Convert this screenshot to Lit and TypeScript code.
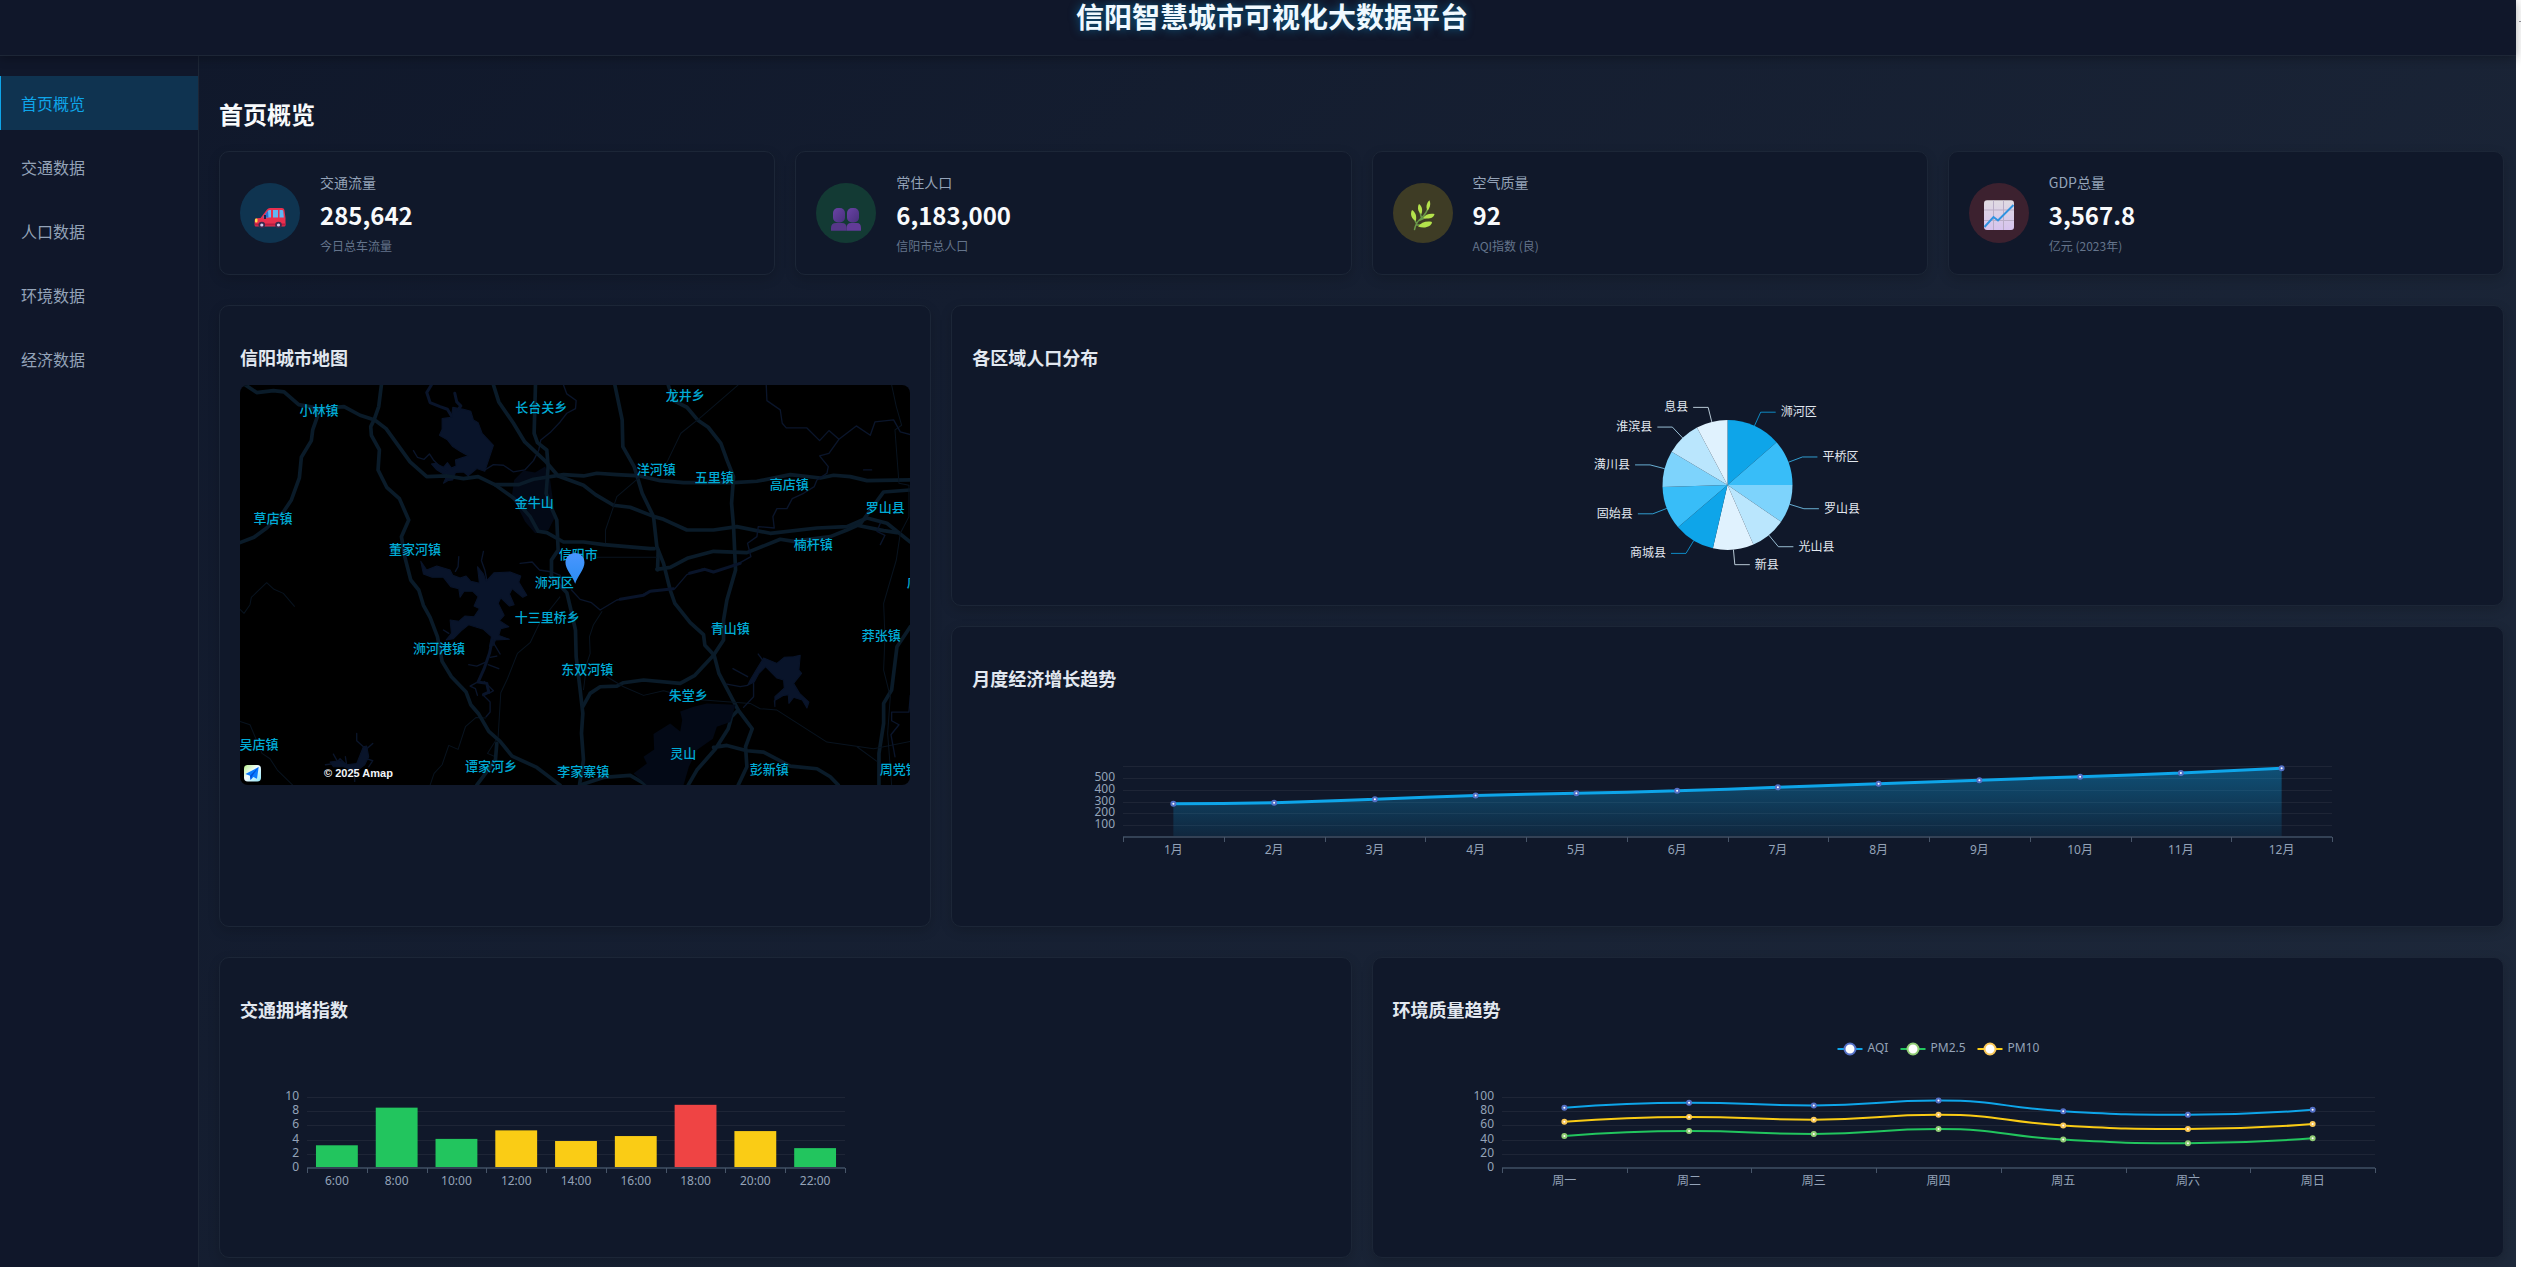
import { LitElement, html, svg, css, nothing } from "lit";
import { customElement, property, state } from "lit/decorators.js";
import { classMap } from "lit/directives/class-map.js";

const CHART_FONT = css`"Noto Sans", "Noto Sans CJK SC", sans-serif`;

type Point = [number, number];

/** Smooth cubic path through the points, never overshooting its neighbours. */
function smoothPath(pts: Point[]): string {
  const smooth = 0.5;
  const clamp = (v: number, a: number, b: number) =>
    Math.max(Math.min(a, b), Math.min(Math.max(a, b), v));
  const n = pts.length;
  const handles = pts.map((p, i) => {
    if (i === 0 || i === n - 1) return { before: p, after: p };
    const prev = pts[i - 1];
    const next = pts[i + 1];
    const vx = (next[0] - prev[0]) * smooth;
    const vy = (next[1] - prev[1]) * smooth;
    const lp = Math.hypot(p[0] - prev[0], p[1] - prev[1]);
    const ln = Math.hypot(next[0] - p[0], next[1] - p[1]);
    const r = ln / (lp + ln);
    const after: Point = [
      clamp(p[0] + vx * r, p[0], next[0]),
      clamp(p[1] + vy * r, p[1], next[1]),
    ];
    const k = (1 - r) / r;
    const before: Point = [
      clamp(p[0] - (after[0] - p[0]) * k, prev[0], p[0]),
      clamp(p[1] - (after[1] - p[1]) * k, prev[1], p[1]),
    ];
    return {
      before,
      after: [p[0] + (p[0] - before[0]) / k, p[1] + (p[1] - before[1]) / k] as Point,
    };
  });
  let d = `M${pts[0][0]} ${pts[0][1]}`;
  for (let i = 1; i < n; i++) {
    const a = handles[i - 1].after;
    const b = handles[i].before;
    d += `C${a[0]} ${a[1]} ${b[0]} ${b[1]} ${pts[i][0]} ${pts[i][1]}`;
  }
  return d;
}

/** Base for charts: keeps `width` in step with the element's own width. */
class SizedChart extends LitElement {
  @state() protected width = 0;
  private observer?: ResizeObserver;

  connectedCallback() {
    super.connectedCallback();
    this.observer = new ResizeObserver(() => this.measure());
    this.observer.observe(this);
    this.measure();
  }

  disconnectedCallback() {
    super.disconnectedCallback();
    this.observer?.disconnect();
  }

  private measure() {
    this.width = Math.round(this.getBoundingClientRect().width);
  }
}

interface Series {
  name: string;
  color: string;
  marker: string;
  values: number[];
}

@customElement("axis-chart")
class AxisChart extends SizedChart {
  @property({ attribute: false }) categories: string[] = [];
  @property({ attribute: false }) series: Series[] = [];
  @property({ attribute: false }) bars: { value: number; color: string }[] = [];
  @property({ type: Number }) max = 100;
  @property({ type: Number }) step = 20;
  @property({ type: Number }) lineWidth = 2;
  @property({ type: Boolean }) area = false;
  @property({ type: Boolean }) legend = false;
  @property({ type: Boolean }) innerTicksOnly = false;
  @property() label = "";

  static styles = css`
    :host {
      display: block;
      height: 200px;
    }
    svg {
      display: block;
      width: 100%;
      height: 200px;
    }
    text {
      font-family: ${CHART_FONT};
      font-size: 12px;
      fill: #94a3b8;
    }
    .end {
      text-anchor: end;
    }
    .mid {
      text-anchor: middle;
    }
    .grid {
      stroke: rgba(255, 255, 255, 0.06);
      stroke-width: 1;
    }
    .axis {
      stroke: #334155;
      stroke-width: 2;
    }
    .tick {
      stroke: #475569;
      stroke-width: 1;
    }
    .line {
      fill: none;
      stroke-linejoin: bevel;
    }
    .dot {
      fill: #fff;
      stroke-width: 2;
    }
  `;

  render() {
    const w = this.width;
    if (!w) return nothing;
    const left = Math.round(w * 0.1);
    const right = w - left;
    const top = 60;
    const bottom = 131;
    const y = (v: number) => bottom - (v / this.max) * (bottom - top);
    const band = (right - left) / this.categories.length;
    const cx = (i: number) => left + band * (i + 0.5);
    const levels: number[] = [];
    for (let v = 0; v <= this.max; v += this.step) levels.push(v);

    return html`<svg role="img" aria-label=${this.label}>
      <defs>
        <linearGradient id="fade" x1="0" y1="0" x2="0" y2="1">
          <stop offset="0" stop-color="#0ea5e9" stop-opacity="0.4" />
          <stop offset="1" stop-color="#0ea5e9" stop-opacity="0.1" />
        </linearGradient>
      </defs>
      ${levels.map((v) => {
        const gy = Math.round(y(v)) + 0.5;
        const hidden = this.innerTicksOnly && (v === 0 || v === this.max);
        return svg`
          ${v ? svg`<line class="grid" x1=${left} x2=${right} y1=${gy} y2=${gy} />` : nothing}
          ${hidden ? nothing : svg`<text class="end" x=${left - 8} y=${Math.round(y(v)) + 3}>${v}</text>`}`;
      })}
      ${this.bars.map(
        (b, i) => svg`<rect fill=${b.color} x=${cx(i) - band * 0.35} width=${band * 0.7}
          y=${y(b.value)} height=${bottom - y(b.value)} />`
      )}
      ${this.area
        ? this.series.map((s) => {
            const pts = s.values.map((v, i): Point => [cx(i), y(v)]);
            return svg`<path fill="url(#fade)"
              d=${`${smoothPath(pts)}L${cx(pts.length - 1)} ${bottom}L${cx(0)} ${bottom}Z`} />`;
          })
        : nothing}
      <line class="axis" x1=${left} x2=${right} y1=${bottom} y2=${bottom} />
      ${[...this.categories, ""].map((_, i) => {
        const tx = Math.round(left + band * i) + 0.5;
        return svg`<line class="tick" x1=${tx} x2=${tx} y1=${bottom} y2=${bottom + 5} />`;
      })}
      ${this.categories.map(
        (c, i) => svg`<text class="mid" x=${cx(i)} y=${bottom + 17}>${c}</text>`
      )}
      ${this.series.map((s) => {
        const pts = s.values.map((v, i): Point => [cx(i), y(v)]);
        return svg`<path class="line" stroke=${s.color} stroke-width=${this.lineWidth} d=${smoothPath(pts)} />`;
      })}
      ${this.series.map((s) =>
        s.values.map(
          (v, i) => svg`<circle class="dot" stroke=${s.marker} cx=${cx(i)} cy=${y(v)} r="2" />`
        )
      )}
      ${this.legend ? this.renderLegend(w) : nothing}
    </svg>`;
  }

  private renderLegend(w: number) {
    const starts = [-101, -38, 39];
    return this.series.map((s, i) => {
      const x = w / 2 + starts[i];
      return svg`
        <line x1=${x} x2=${x + 25} y1="12" y2="12" stroke=${s.color} stroke-width="2" />
        <circle cx=${x + 12.5} cy="12" r="5.5" fill="#fff" stroke=${s.marker} stroke-width="2" />
        <text x=${x + 30} y="15">${s.name}</text>`;
    });
  }
}

@customElement("pie-chart")
class PieChart extends SizedChart {
  @property({ attribute: false }) slices: { name: string; to: number }[] = [];

  static styles = css`
    :host {
      display: block;
      height: 200px;
    }
    svg {
      display: block;
      width: 100%;
      height: 200px;
    }
    text {
      font-family: ${CHART_FONT};
      font-size: 12px;
      fill: #e2e8f0;
    }
    .end {
      text-anchor: end;
    }
    .leader {
      fill: none;
      opacity: 0.8;
    }
  `;

  render() {
    if (!this.width) return nothing;
    const colors = ["#0ea5e9", "#38bdf8", "#7dd3fc", "#bae6fd", "#e0f2fe"];
    const cx = this.width / 2;
    const cy = 100;
    const r = 65;
    const at = (deg: number, rad: number): Point => {
      const a = (deg * Math.PI) / 180;
      return [cx + rad * Math.sin(a), cy - rad * Math.cos(a)];
    };
    let from = 0;
    return html`<svg role="img" aria-label="各区域人口分布">
      ${this.slices.map((s, i) => {
        const [x1, y1] = at(from, r);
        const [x2, y2] = at(s.to, r);
        const mid = (from + s.to) / 2;
        const [lx, ly] = at(mid, r);
        const [ex, ey] = at(mid, r + 15);
        const dir = mid < 180 ? 1 : -1;
        from = s.to;
        const color = colors[i % colors.length];
        return svg`
          <path fill=${color} d=${`M${cx} ${cy}L${x1} ${y1}A${r} ${r} 0 0 1 ${x2} ${y2}Z`} />
          <path class="leader" stroke=${color} d=${`M${lx} ${ly}L${ex} ${ey}h${dir * 15}`} />
          <text class=${dir < 0 ? "end" : ""} x=${ex + dir * 20} y=${ey + 4}>${s.name}</text>`;
      })}
    </svg>`;
  }
}

const MAP_LABELS: [string, number, number][] = [
  ["小林镇", 267, 122],
  ["草店镇", 129, 448],
  ["董家河镇", 555, 540],
  ["浉河港镇", 626, 837],
  ["吴店镇", 86, 1125],
  ["谭家河乡", 784, 1191],
  ["长台关乡", 932, 114],
  ["金牛山", 911, 398],
  ["信阳市", 1044, 556],
  ["浉河区", 973, 639],
  ["十三里桥乡", 951, 745],
  ["东双河镇", 1070, 900],
  ["李家寨镇", 1060, 1207],
  ["龙井乡", 1364, 79],
  ["洋河镇", 1279, 300],
  ["五里镇", 1451, 324],
  ["高店镇", 1678, 344],
  ["罗山县", 1966, 413],
  ["楠杆镇", 1750, 524],
  ["青山镇", 1500, 778],
  ["莽张镇", 1954, 799],
  ["朱堂乡", 1375, 977],
  ["灵山", 1358, 1153],
  ["彭新镇", 1617, 1200],
  ["周党镇", 2006, 1200],
  ["庙仙乡", 2087, 640],
];

@customElement("city-map")
class CityMap extends LitElement {
  static styles = css`
    :host {
      display: block;
    }
    svg {
      display: block;
      width: 100%;
      height: 400px;
      border-radius: 8px;
      background: #000;
    }
    .place {
      font: 500 13px "Noto Sans CJK SC", sans-serif;
      fill: #00abd6;
      text-anchor: middle;
    }
    .credit {
      font: bold 11px "Liberation Sans", sans-serif;
      fill: #f1f5f9;
    }
    .road {
      fill: none;
      stroke: #0a1b29;
      stroke-width: 11;
      stroke-linejoin: round;
      stroke-linecap: round;
    }
    .lane {
      fill: none;
      stroke: #08131f;
      stroke-width: 3;
      stroke-linejoin: round;
    }
    .river {
      fill: none;
      stroke: #0a152b;
      stroke-width: 4;
      stroke-linejoin: round;
      stroke-linecap: round;
    }
    .stream {
      fill: none;
      stroke: #09142a;
      stroke-width: 9;
      stroke-linejoin: round;
      stroke-linecap: round;
    }
    .water {
      fill: #09142a;
      stroke: #09142a;
      stroke-width: 3;
      stroke-linejoin: round;
    }
    .park {
      fill: #030916;
    }
  `;

  render() {
    return html`<svg viewBox="0 0 670 400" preserveAspectRatio="xMidYMid slice" role="img" aria-label="信阳城市地图">
      <defs>
        <linearGradient id="pin" x1="0" y1="0" x2="0" y2="1">
          <stop offset="0" stop-color="#4a96ff" />
          <stop offset="1" stop-color="#2a8df2" />
        </linearGradient>
        <linearGradient id="badge" x1="0" y1="0" x2="1" y2="1">
          <stop offset="0" stop-color="#b9f08a" />
          <stop offset="0.45" stop-color="#f4fbff" />
          <stop offset="1" stop-color="#8fe6f7" />
        </linearGradient>
      </defs>
      <g transform="scale(0.33333) translate(-30 -45)">
        <path class="park" d="M852 330L880 302L915 308L945 290L960 330L975 440L955 480L915 490L885 455L862 410L845 380Z" />
        <path class="water" d="M668 112L700 118L722 124L730 150L744 158L756 190L790 226L768 292L764 304L740 296L714 318L700 306L676 308L668 330L654 332L640 340L650 318L620 300L604 282L616 280L640 292L652 278L664 294L678 288L676 270L700 262L714 258L690 244L668 230L652 210L628 196L636 178L636 146L664 142Z" />
        <path class="stream" d="M604 45L590 68L600 98L630 110L652 118L664 138M674 70L680 96L692 108L684 120" />
        <path class="river" d="M550 242L562 262L582 268L598 252L610 270L630 290L650 304" />
        <path class="river" d="M764 300L790 284L820 286L850 306L884 300L910 272L926 240L932 210L960 188L990 156L1010 130L1036 116L1038 92L1010 72L1000 45" />
        <path class="water" d="M572 574L590 600L620 588L660 600L668 616L690 624L708 618L722 634L748 640L742 590L760 612L768 634L792 608L840 606L872 618L866 636L890 676L878 682L846 656L838 672L852 704L838 708L812 684L804 700L822 736L808 752L836 770L812 776L806 796L838 808L796 810L790 826L778 830L784 800L760 778L740 772L716 764L696 780L670 806L648 810L664 790L660 750L686 754L704 738L732 740L748 716L732 708L744 680L728 664L702 664L690 682L686 656L662 650L640 622L606 622L580 612Z" />
        <path class="river" d="M760 544L754 572L764 600L770 630M788 810L778 850L760 900L742 936L720 948L736 956L742 976M772 874L740 888L716 884M780 862L800 858M774 884L806 896M786 812L810 852M686 560L684 590L676 604M640 780L656 790M870 580L906 576L928 600L966 606L990 616L1000 650" />
        <path class="stream" d="M786 812L778 850L762 896L744 936L770 940L776 966L760 974" />
        <path class="river" d="M776 970L790 962L762 934M760 976L780 996L780 1026L768 1040" />
        <path class="river" d="M380 1090L380 1112L400 1130L406 1150L398 1180L378 1190L350 1186L330 1166L318 1180L286 1184M406 1140L428 1120M404 1164L428 1172L416 1190M350 1186L346 1160M374 1190L374 1234M330 1188L310 1152" />
        <path class="water" d="M400 1130L410 1128L416 1160L404 1184L378 1204L340 1190L310 1190L300 1176L330 1172L350 1184L380 1180Z" />
        <path class="lane" d="M30 718L42 730L60 704L64 682L110 638L132 658L160 670L194 710M30 1054L60 1064L96 1150L120 1166L142 1200L188 1245M600 1245L612 1210L636 1184L656 1126L684 1138L706 1070L738 1042L768 1044M990 680L930 756L900 818L862 850L832 926L812 968L804 1100L772 1150L796 1160L778 1200L740 1240" />
        <path class="road" d="M46 45L80 68L130 62L162 66L206 104L250 112L262 140L248 180L244 212L214 262L208 324L184 390L160 426L110 474L72 502L30 518" />
        <path class="road" d="M250 118L342 110L390 136L434 150L468 176L540 276L590 320L650 318L700 326L744 320L794 344L866 344L910 328L1000 314L1060 318L1100 310L1160 314L1230 318L1290 332L1360 338L1510 338L1580 334L1680 314L1770 324L1810 316L1860 320L1910 332L2040 330" />
        <path class="road" d="M454 45L446 110L432 150L422 170L424 196L448 240L444 300L470 352L508 386L536 450L514 500L524 560L542 630L566 660L580 706L600 742L622 800L636 874L664 920L708 966L722 1004L746 1032L776 1084L810 1114L846 1158L920 1192L990 1245" />
        <path class="road" d="M790 45L806 96L850 160L884 216L948 276L984 318L1060 346L1096 374L1150 406L1200 412L1272 440L1300 448L1370 480L1450 480L1520 470L1620 490L1760 474L1850 470L1910 444L1970 460L2040 516" />
        <path class="road" d="M916 45L912 190L922 218L950 240L954 290L948 370L962 410L980 450L984 540L964 570L964 620L1010 668L1020 710L1036 780L1038 860L1050 960L1058 1030L1054 1090L1060 1170L1048 1245" />
        <path class="road" d="M794 344L850 384L900 440L924 484L950 488L1000 516L1060 516L1120 524L1260 536L1272 536" />
        <path class="road" d="M1154 45L1176 150L1178 230L1212 290L1236 370L1270 440L1280 530L1300 580L1320 660L1334 700L1380 758L1420 794L1424 826L1452 856L1466 910L1524 1020L1566 1076L1546 1130L1550 1190L1524 1245" />
        <path class="road" d="M1314 45L1330 92L1370 112L1402 150L1434 172L1472 220L1490 270L1510 320L1504 400L1510 470L1516 600L1490 690L1480 750L1480 810L1450 856L1394 916L1350 940L1240 930L1180 938L1160 948L1110 950L1080 970L1058 1010" />
        <path class="road" d="M1280 598L1320 592L1374 564L1450 544L1550 548L1650 508L1690 514L1800 500L1850 480L1890 462L1960 366L2040 360M1880 466L1960 482L2000 488M1284 540L1282 600" />
        <path class="road" d="M1524 1020L1504 1040L1494 1076L1456 1136L1400 1200L1374 1245M1450 1132L1490 1126L1550 1142L1600 1146L1680 1188L1760 1196L1800 1220L1824 1245M1050 1245L1120 1222L1200 1216L1250 1245M800 1120L796 1170L740 1245" />
        <path class="road" d="M2040 770L2000 830L1984 960L1960 1000L1960 1060L1946 1150L1946 1245" />
        <path class="lane" d="M1524 45L1414 140L1352 190L1304 290M1230 320L1160 380L1150 410L1126 480L1126 520M1100 562L1280 562M1984 45L1998 110L2014 166L1994 180L2006 340L2036 346L2036 440L2010 490L1998 570L1960 700L1964 800L1960 900L1980 980L1972 1090L1984 1245M1130 920L1180 950L1240 976L1300 962L1400 988L1560 1000L1590 1016L1640 1020L1790 1116L1930 1136L2040 1114M1880 1130L1940 1174" />
        <path class="river" d="M1608 45L1610 92L1650 120L1656 160L1668 174L1730 174L1768 212L1796 182L1826 208L1878 168L1920 196L1934 156L1990 150L2010 186L2040 194M1826 208L1796 250L1768 258L1794 290L1790 310L1760 330L1752 350L1720 370L1686 386L1670 416L1640 416L1628 440L1632 474L1584 470L1580 500L1552 520L1562 560L1530 578L1448 608L1420 596L1370 614L1334 656L1260 662L1230 678L1160 690L1110 720L1084 698L1050 688L1024 660" />
        <path class="stream" d="M1530 580L1450 606L1424 598L1378 610M1330 656L1260 664L1240 676L1170 688" stroke-width="6" />
        <path class="lane" d="M1116 724L1090 764L1078 800L1080 850L1070 880L1060 960" />
        <path class="river" d="M1950 460L1940 484L1964 496L1950 524M1900 300L1924 300M2040 976L2036 1026L1984 1026L1984 1052L2006 1064L1982 1094L1994 1160" />
        <path class="park" d="M1350 1024L1390 1010L1430 1000L1516 1004L1500 1056L1460 1070L1448 1106L1400 1140L1376 1190L1360 1245H1250L1210 1210L1250 1180L1240 1160L1272 1138L1270 1092L1320 1060L1350 1084L1356 1050Z" />
        <path class="water" d="M1600 864L1640 880L1662 862L1690 860L1710 856L1706 900L1714 910L1690 940L1708 970L1736 996L1730 1014L1716 990L1690 982L1676 1000L1674 974L1660 976L1632 992L1634 1010L1634 980L1662 954L1660 930L1640 924L1606 890L1586 910L1572 936L1552 946L1560 930L1580 896Z" />
        <path class="river" d="M1552 946L1530 950L1490 942M1570 940L1570 980L1540 1012M1600 874L1584 852M1552 920L1508 896" />
        <rect x="42" y="1185" width="51" height="49" rx="11" fill="url(#badge)" />
        <path fill="#0a7bff" d="M86 1191L46 1212L60 1217L62 1230L70 1221L81 1226Z" />
        <path fill="#0050d8" d="M86 1191L60 1217L62 1230L66 1219Z" />
      </g>
      ${MAP_LABELS.map(
        ([name, x, y]) =>
          svg`<text class="place" x=${Math.round((x - 30) / 3)} y=${Math.round((y - 45) / 3) + 4}>${name}</text>`
      )}
      <path fill="url(#pin)" d="M335 168C329.700 168 325.300 172 325.300 177.500C325.300 184.500 332 190 335 198.700C338 190 344.300 184.500 344.300 177.500C344.300 172 340.300 168 335 168Z" />
      <text class="credit" x="84" y="392">© 2025 Amap</text>
    </svg>`;
  }
}

const carIcon = svg`
  <path fill="#e8304f" d="M8.500 23L15 14.500Q16 13 18 13H30Q32 13 32.400 15L33.500 23V30Q33.500 31.500 32 31.500H4Q2.600 31.500 2.600 30V25.500Q2.600 23.500 5 23.300Z" />
  <path fill="#5fb8f5" d="M11 22.500L16 15.800Q16.600 15 17.500 15H19V22.500ZM21 15H26V22.500H21ZM27.500 15H30Q31 15 31.200 16L31.800 22.500H27.500Z" />
  <path fill="#2f6fd0" d="M11 22.500L16 15.800L16.500 22.500Z" />
  <path fill="#1d2148" d="M12 20h2v4h-2z" />
  <path fill="#b91d42" d="M3 28.500H33.500V30.500H3Z" />
  <rect x="3" y="23.500" width="2.500" height="4" rx="1" fill="#ffd84d" />
  <circle cx="9.800" cy="30" r="3.300" fill="#3a2a4f" /><circle cx="9.800" cy="30" r="1.600" fill="#d8c9ea" />
  <circle cx="26.500" cy="30" r="3.300" fill="#3a2a4f" /><circle cx="26.500" cy="30" r="1.600" fill="#d8c9ea" />`;

const peopleIcon = svg`
  <defs><linearGradient id="bust" x1="0" y1="0" x2="1" y2="1">
    <stop offset="0" stop-color="#6a43a5" /><stop offset="1" stop-color="#48307d" />
  </linearGradient></defs>
  <rect x="5" y="13" width="12" height="14.500" rx="5" fill="url(#bust)" />
  <rect x="19" y="13" width="12" height="14.500" rx="5" fill="url(#bust)" />
  <path fill="#563788" d="M3 35.700V33Q3 28 8 28H14Q18.600 28 18.600 33V35.700Z" />
  <path fill="#623b98" d="M18.600 35.700V33Q18.600 28 23 28H29Q33 28 33 33V35.700Z" />`;

const herbIcon = svg`
  <path fill="none" stroke="#6b9a4b" stroke-width="1.500" stroke-linecap="round" d="M9.500 34.500Q11 27 16.500 23Q22 18 24 10M16.500 23Q15.500 19 14.600 15M11.500 28.500Q9.500 25 8.200 21M14 25.500L24 21M11.500 30L20 30" />
  <g fill="#b4e34c">
    <path d="M24.500 5.300C26 9 25 13 22.600 15.500C20.500 12.500 21.500 8 24.500 5.300Z" />
    <path d="M14 9C17 11 18 15.500 16.300 19C13 17 12 12.500 14 9Z" />
    <path d="M7 15C10.500 17 12 21.500 10.800 26C6.500 24 4.800 19 7 15Z" />
    <path d="M29.500 19C29 23 23.500 24.500 18 23C20 19.500 25 18 29.500 19Z" />
    <path d="M27 27C26.500 31.500 20 34 13 31.500C16 27.500 21.500 25.500 27 27Z" />
  </g>`;

const trendIcon = svg`
  <defs><linearGradient id="paper" x1="0" y1="0" x2="0" y2="1">
    <stop offset="0" stop-color="#e0dbe2" /><stop offset="1" stop-color="#d6c3ee" />
  </linearGradient></defs>
  <rect x="3" y="5.300" width="30" height="29.700" rx="3" fill="url(#paper)" />
  <path stroke="#b9adc6" stroke-width="1" fill="none" d="M12.500 5.500V35M22.500 5.500V35M3 15H33M3 25.500H33" />
  <path stroke="#2f93e0" stroke-width="2" fill="none" d="M3.500 32L12.500 22L17 25.500L32.500 10" />`;

const STATS = [
  { tone: "blue", icon: carIcon, label: "交通流量", value: "285,642", note: "今日总车流量" },
  { tone: "green", icon: peopleIcon, label: "常住人口", value: "6,183,000", note: "信阳市总人口" },
  { tone: "yellow", icon: herbIcon, label: "空气质量", value: "92", note: "AQI指数 (良)" },
  { tone: "red", icon: trendIcon, label: "GDP总量", value: "3,567.8", note: "亿元 (2023年)" },
];

const NAV = ["首页概览", "交通数据", "人口数据", "环境数据", "经济数据"];

const REGIONS = [
  { name: "浉河区", to: 49 },
  { name: "平桥区", to: 90 },
  { name: "罗山县", to: 124.5 },
  { name: "光山县", to: 156.5 },
  { name: "新县", to: 193 },
  { name: "商城县", to: 229.5 },
  { name: "固始县", to: 268.3 },
  { name: "潢川县", to: 300.8 },
  { name: "淮滨县", to: 332 },
  { name: "息县", to: 360 },
];

const GREEN = "#22c55e";
const AMBER = "#facc15";
const RED = "#ef4444";

const TRAFFIC = [
  { time: "6:00", value: 3.2, color: GREEN },
  { time: "8:00", value: 8.5, color: GREEN },
  { time: "10:00", value: 4.1, color: GREEN },
  { time: "12:00", value: 5.3, color: AMBER },
  { time: "14:00", value: 3.8, color: AMBER },
  { time: "16:00", value: 4.5, color: AMBER },
  { time: "18:00", value: 8.9, color: RED },
  { time: "20:00", value: 5.2, color: AMBER },
  { time: "22:00", value: 2.8, color: GREEN },
];

const MONTHS = Array.from({ length: 12 }, (_, i) => `${i + 1}月`);
const ECONOMY: Series[] = [
  {
    name: "经济",
    color: "#0ea5e9",
    marker: "#5470c6",
    values: [280, 290, 320, 350, 370, 390, 420, 450, 480, 510, 540, 580],
  },
];

const WEEK = ["周一", "周二", "周三", "周四", "周五", "周六", "周日"];
const AIR: Series[] = [
  { name: "AQI", color: "#0ea5e9", marker: "#5470c6", values: [85, 92, 88, 95, 80, 75, 82] },
  { name: "PM2.5", color: GREEN, marker: "#91cc75", values: [45, 52, 48, 55, 40, 35, 42] },
  { name: "PM10", color: AMBER, marker: "#fac858", values: [65, 72, 68, 75, 60, 55, 62] },
];

@customElement("app-root")
class AppRoot extends LitElement {
  @state() private active = 0;

  static styles = css`
    :host {
      display: flex;
      min-height: 100vh;
      background: #fff;
      color: #e2e8f0;
      font-family: "Noto Sans CJK SC", sans-serif;
    }
    * {
      box-sizing: border-box;
    }
    .page {
      flex: 1;
      min-width: 0;
      display: flex;
      flex-direction: column;
      background: linear-gradient(135deg, #0f172a 0%, #1e293b 100%);
    }
    .rail {
      flex: none;
      width: 5px;
      padding: 21px 0 0 3px;
    }
    .notch {
      display: block;
      height: 1px;
      background: #94949c;
    }
    .header {
      position: relative;
      z-index: 1;
      padding: 0 0 23px 28px;
      background: #10172a;
      border-bottom: 1px solid #1d2636;
      box-shadow: 0 2px 10px rgba(0, 0, 0, 0.3);
      text-align: center;
    }
    .header h1 {
      margin: 0;
      font-size: 28px;
      line-height: 32px;
      color: #f0f9ff;
      text-shadow: 0 0 10px rgba(14, 165, 233, 0.5);
    }
    .body {
      flex: 1;
      display: flex;
    }
    .sidebar {
      flex: none;
      width: 199px;
      padding-top: 20px;
      background: #10172a;
      border-right: 1px solid #1d2636;
      display: flex;
      flex-direction: column;
      gap: 10px;
    }
    .item {
      padding: 15px 20px;
      border-left: 1px solid transparent;
      font-size: 16px;
      line-height: 24px;
      color: #94a3b8;
      text-decoration: none;
    }
    .item.active {
      background: rgba(14, 165, 233, 0.2);
      border-left-color: #0ea5e9;
      color: #0ea5e9;
    }
    main {
      flex: 1;
      min-width: 0;
      padding: 40px 12px 9px 20px;
    }
    h2 {
      margin: 0 0 20px;
      font-size: 24px;
      line-height: 35px;
      color: #f8fafc;
    }
    .stats {
      display: grid;
      grid-template-columns: repeat(4, minmax(0, 1fr));
      gap: 20px;
      margin-bottom: 30px;
    }
    .card {
      background: #10182a;
      border: 1px solid #1c2637;
      border-radius: 10px;
      box-shadow: 0 4px 12px rgba(0, 0, 0, 0.16);
      padding: 20px;
    }
    .stat {
      display: flex;
      align-items: center;
      gap: 20px;
    }
    .icon {
      flex: none;
      width: 60px;
      height: 60px;
      border-radius: 50%;
      display: grid;
      place-items: center;
    }
    .icon svg {
      display: block;
      width: 36px;
      height: 36px;
    }
    .blue {
      background: rgba(14, 165, 233, 0.2);
    }
    .green {
      background: rgba(34, 197, 94, 0.2);
    }
    .yellow {
      background: rgba(250, 204, 21, 0.2);
    }
    .red {
      background: rgba(239, 68, 68, 0.2);
    }
    .figures {
      display: flex;
      flex-direction: column;
      gap: 5px;
    }
    .label {
      font-size: 14px;
      line-height: 20px;
      color: #94a3b8;
    }
    .value {
      font-size: 24px;
      line-height: 35px;
      font-weight: bold;
      color: #f8fafc;
    }
    .note {
      font-size: 12px;
      line-height: 17px;
      color: #64748b;
    }
    h3 {
      margin: 18px 0 15px;
      font-size: 18px;
      line-height: 26px;
      color: #e2e8f0;
    }
    .upper {
      display: grid;
      grid-template-columns: minmax(0, 89fr) minmax(0, 194fr);
      gap: 20px;
      margin-bottom: 30px;
    }
    .stack {
      display: grid;
      gap: 20px;
    }
    .lower {
      display: grid;
      grid-template-columns: repeat(2, minmax(0, 1fr));
      gap: 20px;
    }
    .compact {
      max-width: 672px;
    }
  `;

  render() {
    return html`
      <div class="page">
        <header class="header"><h1>信阳智慧城市可视化大数据平台</h1></header>
        <div class="body">
          <nav class="sidebar">
            ${NAV.map(
              (name, i) => html`<a
                href="#"
                class=${classMap({ item: true, active: i === this.active })}
                @click=${(e: Event) => {
                  e.preventDefault();
                  this.active = i;
                }}
                >${name}</a
              >`
            )}
          </nav>
          <main>
            <h2>首页概览</h2>
            <section class="stats">
              ${STATS.map(
                (s) => html`<article class="card stat">
                  <div class="icon ${s.tone}">
                    <svg viewBox="0 0 36 36" aria-hidden="true">${s.icon}</svg>
                  </div>
                  <div class="figures">
                    <span class="label">${s.label}</span>
                    <span class="value">${s.value}</span>
                    <span class="note">${s.note}</span>
                  </div>
                </article>`
              )}
            </section>
            <section class="upper">
              <article class="card">
                <h3>信阳城市地图</h3>
                <city-map></city-map>
              </article>
              <div class="stack">
                <article class="card">
                  <h3>各区域人口分布</h3>
                  <pie-chart .slices=${REGIONS}></pie-chart>
                </article>
                <article class="card">
                  <h3>月度经济增长趋势</h3>
                  <axis-chart
                    label="月度经济增长趋势"
                    .categories=${MONTHS}
                    .series=${ECONOMY}
                    .max=${600}
                    .step=${100}
                    .lineWidth=${3}
                    area
                    innerTicksOnly
                  ></axis-chart>
                </article>
              </div>
            </section>
            <section class="lower">
              <article class="card">
                <h3>交通拥堵指数</h3>
                <axis-chart
                  class="compact"
                  label="交通拥堵指数"
                  .categories=${TRAFFIC.map((t) => t.time)}
                  .bars=${TRAFFIC}
                  .max=${10}
                  .step=${2}
                ></axis-chart>
              </article>
              <article class="card">
                <h3>环境质量趋势</h3>
                <axis-chart
                  label="环境质量趋势"
                  .categories=${WEEK}
                  .series=${AIR}
                  .max=${100}
                  .step=${20}
                  legend
                ></axis-chart>
              </article>
            </section>
          </main>
        </div>
      </div>
      <div class="rail" aria-hidden="true"><span class="notch"></span></div>
    `;
  }
}
